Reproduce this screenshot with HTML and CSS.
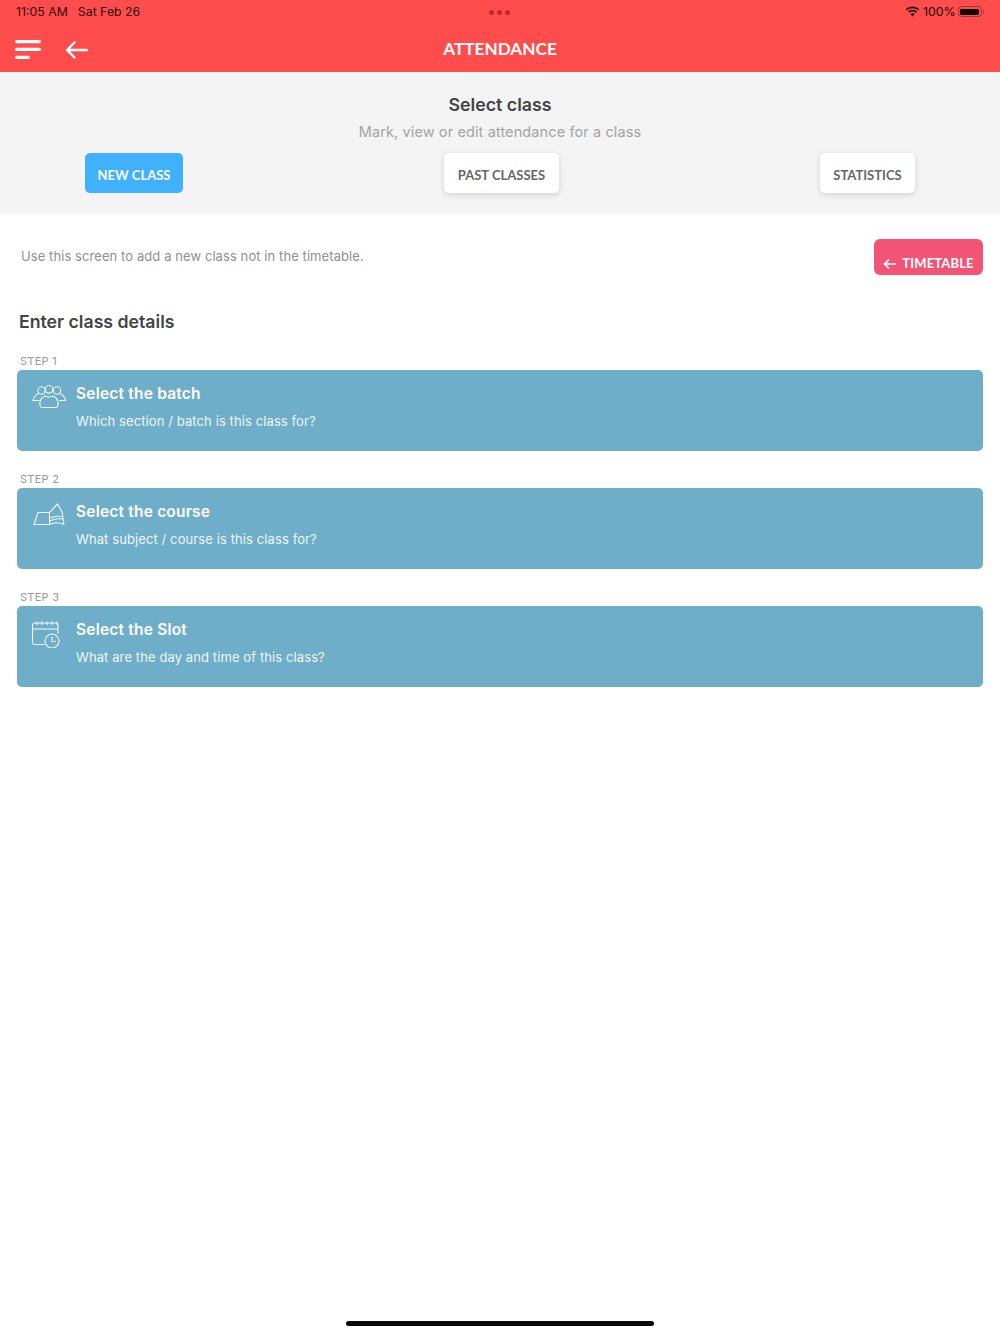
FILE: index.html
```html
<!DOCTYPE html>
<html lang="en">
<head>
<meta charset="utf-8">
<title>Attendance</title>
<link rel="stylesheet" href="styles.css">
</head>
<body>
<div class="app">
  <header class="topbar">
    <div class="status">
      <div class="status-left"><span>11:05 AM</span><span>Sat Feb 26</span></div>
      <div class="dots"><i></i><i></i><i></i></div>
      <div class="status-right">
        <svg class="wifi" width="15" height="11" viewBox="0 0 15 11"><path d="M7.5 2.2c2.2 0 4.2.8 5.7 2.2l1.1-1.2C12.5 1.500 10.100.5 7.500.5S2.500 1.500.7 3.200l1.100 1.200C3.300 3 5.300 2.200 7.500 2.200z"/><path d="M7.500 5.400c1.300 0 2.500.5 3.400 1.300l1.100-1.200C10.800 4.400 9.200 3.700 7.500 3.700s-3.300.7-4.500 1.800l1.100 1.200c.9-.8 2.100-1.300 3.400-1.300z"/><path d="M7.500 10.500l2.200-2.400c-.6-.5-1.400-.9-2.200-.9s-1.600.4-2.200.9z"/></svg>
        <span>100%</span>
        <span class="battery"><span class="battery-fill"></span></span>
        <span class="battery-cap"></span>
      </div>
    </div>
    <nav class="nav">
      <div class="nav-icons">
        <svg width="26" height="19" viewBox="0 0 26 19"><rect x="0" y="0" width="26" height="3.200" rx="1.600"/><rect x="0" y="7.800" width="26" height="3.200" rx="1.600"/><rect x="0" y="15.800" width="15" height="3.200" rx="1.600"/></svg>
        <svg class="back" width="23" height="18" viewBox="0 0 23 18"><path d="M22 9H2M9.500 1.500 2 9l7.500 7.500"/></svg>
      </div>
      <h1 class="nav-title">ATTENDANCE</h1>
    </nav>
  </header>

  <section class="selector">
    <h2 class="selector-title">Select class</h2>
    <p class="selector-sub">Mark, view or edit attendance for a class</p>
    <div class="selector-actions">
      <a class="btn btn-primary btn-new">NEW CLASS</a>
      <a class="btn btn-past">PAST CLASSES</a>
      <a class="btn btn-stats">STATISTICS</a>
    </div>
  </section>

  <main class="content">
    <div class="intro">
      <p class="intro-text">Use this screen to add a new class not in the timetable.</p>
      <a class="timetable">
        <svg width="13" height="10" viewBox="0 0 13 10"><path d="M12.500 5H1.500M5.500 1 1.500 5l4 4"/></svg>
        TIMETABLE
      </a>
    </div>
    <h3 class="details-title">Enter class details</h3>

    <div class="step">
      <div class="step-label">STEP 1</div>
      <div class="card">
        <svg class="card-icon" width="34" height="23" viewBox="0 0 34 23"><circle cx="9.500" cy="5.500" r="3.700"/><circle cx="17" cy="4.300" r="3.800"/><circle cx="25" cy="5.500" r="3.700"/><path d="M6.500 8.500C3.500 10 1.500 12 1 15.500h6.500M28 8.500c3 1.500 5 3.500 5.500 7H27"/><path d="M8.500 21.500c-1.500-3 -.5-8.500 4.500-10.500 2.500 1.300 5.500 1.300 8 0 5 2 6 7.500 4.500 10.500-.5.700-1.500 1-2 1h-13c-.5 0-1.500-.3-2-1z"/></svg>
        <div class="card-text">
          <div class="card-title">Select the batch</div>
          <div class="card-sub">Which section / batch is this class for?</div>
        </div>
      </div>
    </div>

    <div class="step">
      <div class="step-label">STEP 2</div>
      <div class="card">
        <svg class="card-icon" width="34" height="23" viewBox="0 0 34 23"><path d="M2 21.500 6 9.500h11.500v12zM17.500 21.500V9.500l8-8.500 4.500 8 2 12.500M17.500 21.500c4-2 9-2.700 14.500 0M18 18c4-2.300 8-2.800 13-2M18.500 15c3-1.800 6-2.300 11-1.500"/></svg>
        <div class="card-text">
          <div class="card-title">Select the course</div>
          <div class="card-sub">What subject / course is this class for?</div>
        </div>
      </div>
    </div>

    <div class="step">
      <div class="step-label">STEP 3</div>
      <div class="card">
        <svg class="card-icon" width="34" height="27" viewBox="0 0 34 27"><path d="M12.500 23.500H3a2.500 2.500 0 0 1-2.500-2.500V4.500A2.500 2.500 0 0 1 3 2h20.500A2.500 2.500 0 0 1 26 4.500v8"/><path d="M.5 8H26M5 .5v3.500M10 .5v3.500M15 .5v3.500M20 .5v3.500M25 .5v3.500"/><circle cx="20" cy="20" r="7"/><path d="M20 15.500V20.500h3.800"/></svg>
        <div class="card-text">
          <div class="card-title">Select the Slot</div>
          <div class="card-sub">What are the day and time of this class?</div>
        </div>
      </div>
    </div>
  </main>

  <div class="home-indicator"></div>
</div>
</body>
</html>
```

FILE: styles.css
```css
* { box-sizing: border-box; }
html, body { margin: 0; padding: 0; }
body { background: #fff; font-family: Inter, "Liberation Sans", sans-serif; color: #444; }
h1, h2, h3, p { margin: 0; }

.app { width: 1000px; height: 1334px; display: flex; flex-direction: column; overflow: hidden; }

.topbar { height: 72px; flex: none; background: #ff4d4d; }
.status { height: 23px; padding: 0 16px; display: flex; align-items: center; justify-content: space-between; position: relative; font-family: Inter, sans-serif; font-size: 12.300px; font-weight: 400; color: #2a0b0b; }
.status-left { display: flex; gap: 10px; }
.dots { position: absolute; left: 489px; top: 10px; display: flex; gap: 3px; }
.dots i { width: 5px; height: 5px; border-radius: 50%; background: #c4262f; }
.status-right { display: flex; align-items: center; color: #1a0606; }
.wifi { fill: #1a0606; margin-right: 3px; }
.battery { width: 24px; height: 11px; margin-left: 2px; padding: 1.500px; border: 1px solid #a53338; border-radius: 3.500px; display: block; }
.battery-fill { display: block; width: 100%; height: 100%; background: #0e0303; border-radius: 1.500px; }
.battery-cap { width: 1.500px; height: 4px; margin-left: 1px; background: #a53338; border-radius: 0 1px 1px 0; }

.nav { height: 49px; position: relative; display: flex; align-items: center; justify-content: center; padding-top: 3px; }
.nav-icons { position: absolute; left: 15px; top: 17px; display: flex; align-items: center; gap: 24px; }
.nav-icons svg { fill: #fff; display: block; }
.nav-icons .back { fill: none; stroke: #fff; stroke-width: 2.400; stroke-linecap: round; stroke-linejoin: round; }
.nav-title { font-family: Lato, sans-serif; font-size: 17.200px; font-weight: 700; color: #fff; line-height: 1; }

.selector { height: 142px; flex: none; background: #f4f4f4; padding-top: 22px; text-align: center; }
.selector-title { font-size: 17.800px; font-weight: 600; line-height: 21px; color: #444; }
.selector-sub { margin-top: 6px; font-size: 14.500px; font-weight: 400; line-height: 21px; color: #a3a3a3; letter-spacing: .11px; }
.selector-actions { margin-top: 11px; padding: 0 85px; display: flex; justify-content: space-between; }
.btn { height: 40px; padding-top: 3px; display: flex; align-items: center; justify-content: center; border-radius: 5px; font-family: Lato, sans-serif; font-size: 13px; font-weight: 700; background: #fff; color: #666; box-shadow: 0 2px 6px rgba(0,0,0,.14); }
.btn-new { width: 98px; }
.btn-past { width: 115px; }
.btn-stats { width: 95px; }
.btn-primary { background: #3fb1ff; color: #fff; box-shadow: none; }

.content { flex: 1; padding: 0 17px; }
.intro { height: 60px; display: flex; justify-content: space-between; align-items: flex-start; padding-top: 25px; }
.intro-text { margin-left: 4px; margin-top: 8px; font-size: 13px; line-height: 18px; color: #8f8f8f; letter-spacing: .08px; }
.timetable { width: 109px; height: 36px; background: #f25476; border-radius: 6px; color: #fff; font-family: Lato, sans-serif; font-weight: 700; font-size: 13px; letter-spacing: .15px; display: flex; align-items: flex-end; justify-content: center; gap: 6px; padding-bottom: 3px; line-height: 18px; }
.timetable svg { fill: none; stroke: #fff; stroke-width: 1.700; stroke-linecap: round; stroke-linejoin: round; margin-bottom: 3px; }
.details-title { margin: 37px 0 0 2px; font-size: 17.700px; font-weight: 600; line-height: 22px; color: #444; }

.step { margin-top: 20px; }
.details-title + .step { margin-top: 20px; }
.step-label { margin-left: 3px; font-size: 11px; line-height: 16px; color: #999; letter-spacing: .25px; height: 17px; }
.card { height: 81px; background: #6faec8; border-radius: 5px; display: flex; padding: 15px 0 0 15px; color: #fff; }
.card-icon { flex: none; fill: none; stroke: #fff; stroke-width: 1.100; opacity: .92; display: block; }
.card-text { margin-left: 10px; }
.card-title { font-size: 15.500px; font-weight: 600; line-height: 18px; letter-spacing: .2px; }
.card-sub { margin-top: 9px; font-size: 13px; line-height: 18px; letter-spacing: .1px; color: #eef6fa; }

.home-indicator { position: absolute; left: 346px; top: 1321px; width: 308px; height: 5px; border-radius: 3px; background: #0a0a0a; }
```
